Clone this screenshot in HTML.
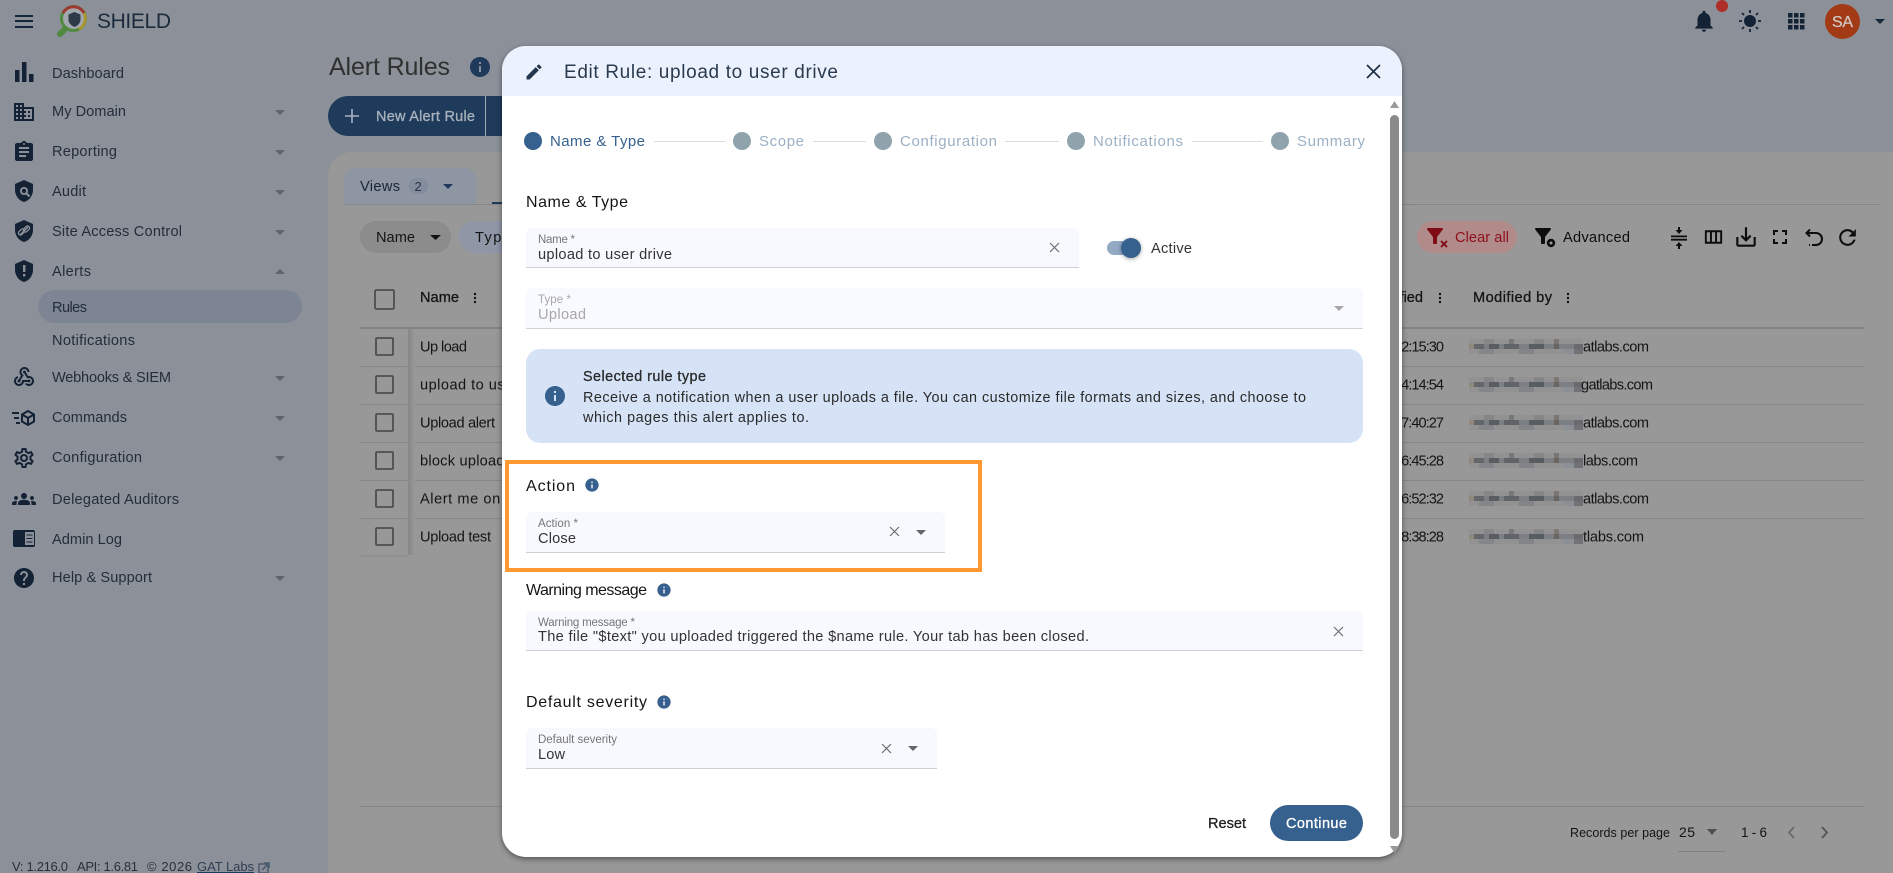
<!DOCTYPE html>
<html lang="en">
<head>
<meta charset="utf-8">
<title>SHIELD - Alert Rules</title>
<style>
html,body{margin:0;padding:0;width:1893px;height:873px;overflow:hidden;background:#8c9199}
svg{display:block;position:absolute;left:0;top:0}
text{font-family:"Liberation Sans",sans-serif;white-space:pre}
.s{font-size:14.6px;fill:#232d3b}
.t{font-size:14.6px;fill:#141414}
.m{stroke:currentColor;stroke-width:.3px}
.lb{font-size:11.5px;fill:#767676}
.v{font-size:14.6px;fill:#333}
.h{font-size:16px;fill:#151515}
.st{font-size:15px;fill:#9cb0c4}
.b{font-size:14.4px;fill:#2a2a2a}
</style>
</head>
<body>
<svg width="1893" height="873" viewBox="0 0 1893 873" xmlns="http://www.w3.org/2000/svg">
<defs>
<symbol id="domain" viewBox="0 0 24 24"><path d="M12 7V3H2v18h20V7H12zM6 19H4v-2h2v2zm0-4H4v-2h2v2zm0-4H4V9h2v2zm0-4H4V5h2v2zm4 12H8v-2h2v2zm0-4H8v-2h2v2zm0-4H8V9h2v2zm0-4H8V5h2v2zm10 12h-8v-2h2v-2h-2v-2h2v-2h-2V9h8v10zm-2-8h-2v2h2v-2zm0 4h-2v2h2v-2z"/></symbol>
<symbol id="assign" viewBox="0 0 24 24"><path d="M19 3h-4.18C14.4 1.84 13.3 1 12 1c-1.3 0-2.4.84-2.82 2H5c-1.1 0-2 .9-2 2v14c0 1.1.9 2 2 2h14c1.1 0 2-.9 2-2V5c0-1.1-.9-2-2-2zm-7 0c.55 0 1 .45 1 1s-.45 1-1 1-1-.45-1-1 .45-1 1-1zm2 14H7v-2h7v2zm3-4H7v-2h10v2zm0-4H7V7h10v2z"/></symbol>
<symbol id="shield" viewBox="0 0 24 24"><path d="M12 1L3 5v6c0 5.55 3.84 10.74 9 12 5.16-1.26 9-6.45 9-12V5l-9-4z"/></symbol>
<symbol id="webhook" viewBox="0 0 24 24"><path d="M10 15h5.88c.27-.31.67-.5 1.12-.5.83 0 1.5.67 1.5 1.5s-.67 1.5-1.5 1.5c-.44 0-.84-.19-1.12-.5H11.9c-.46 2.28-2.48 4-4.9 4-2.76 0-5-2.24-5-5 0-2.42 1.72-4.44 4-4.9v2.07c-1.16.41-2 1.53-2 2.83 0 1.65 1.35 3 3 3s3-1.35 3-3v-1zm2.5-11c1.65 0 3 1.35 3 3h2c0-2.76-2.24-5-5-5s-5 2.24-5 5c0 1.43.6 2.71 1.55 3.62l-2.35 3.9c-.68.14-1.2.75-1.2 1.48 0 .83.67 1.5 1.5 1.5s1.5-.67 1.5-1.5c0-.16-.02-.31-.07-.45l3.38-5.63C10.49 9.61 9.5 8.42 9.5 7c0-1.65 1.35-3 3-3zm4.5 9c-.64 0-1.23.2-1.72.54l-3.05-5.07C11.53 8.35 11 7.74 11 7c0-.83.67-1.5 1.5-1.5S14 6.17 14 7c0 .15-.02.29-.06.43l2.19 3.65c.28-.05.57-.08.87-.08 2.76 0 5 2.24 5 5s-2.24 5-5 5c-1.85 0-3.47-1.01-4.33-2.5h2.67c.48.32 1.05.5 1.66.5 1.65 0 3-1.35 3-3s-1.35-3-3-3z"/></symbol>
<symbol id="gear" viewBox="0 0 24 24"><path d="M19.43 12.98c.04-.32.07-.64.07-.98 0-.34-.03-.66-.07-.98l2.11-1.65c.19-.15.24-.42.12-.64l-2-3.46c-.09-.16-.26-.25-.44-.25-.06 0-.12.01-.17.03l-2.49 1c-.52-.4-1.08-.73-1.69-.98l-.38-2.65C14.46 2.18 14.25 2 14 2h-4c-.25 0-.46.18-.49.42l-.38 2.65c-.61.25-1.17.59-1.69.98l-2.49-1c-.06-.02-.12-.03-.18-.03-.17 0-.34.09-.43.25l-2 3.46c-.13.22-.07.49.12.64l2.11 1.65c-.04.32-.07.65-.07.98 0 .33.03.66.07.98l-2.11 1.65c-.19.15-.24.42-.12.64l2 3.46c.09.16.26.25.44.25.06 0 .12-.01.17-.03l2.49-1c.52.4 1.08.73 1.69.98l.38 2.65c.03.24.24.42.49.42h4c.25 0 .46-.18.49-.42l.38-2.65c.61-.25 1.17-.59 1.69-.98l2.49 1c.06.02.12.03.18.03.17 0 .34-.09.43-.25l2-3.46c.12-.22.07-.49-.12-.64l-2.11-1.65zm-1.98-1.71c.04.31.05.52.05.73 0 .21-.02.43-.05.73l-.14 1.13.89.7 1.08.84-.7 1.21-1.27-.51-1.04-.42-.9.68c-.43.32-.84.56-1.25.73l-1.06.43-.16 1.13-.2 1.35h-1.4l-.19-1.35-.16-1.13-1.06-.43c-.43-.18-.83-.41-1.23-.71l-.91-.7-1.06.43-1.27.51-.7-1.21 1.08-.84.89-.7-.14-1.13c-.03-.31-.05-.54-.05-.74s.02-.43.05-.73l.14-1.13-.89-.7-1.08-.84.7-1.21 1.27.51 1.04.42.9-.68c.43-.32.84-.56 1.25-.73l1.06-.43.16-1.13.2-1.35h1.39l.19 1.35.16 1.13 1.06.43c.43.18.83.41 1.23.71l.91.7 1.06-.43 1.27-.51.7 1.21-1.07.85-.89.7.14 1.13zM12 8c-2.21 0-4 1.79-4 4s1.79 4 4 4 4-1.79 4-4-1.79-4-4-4zm0 6c-1.1 0-2-.9-2-2s.9-2 2-2 2 .9 2 2-.9 2-2 2z"/></symbol>
<symbol id="groups" viewBox="0 0 24 24"><path d="M12 12.75c1.63 0 3.07.39 4.24.9 1.08.48 1.76 1.56 1.76 2.73V18H6v-1.61c0-1.18.68-2.26 1.76-2.73 1.17-.52 2.61-.91 4.24-.91zM4 13c1.1 0 2-.9 2-2s-.9-2-2-2-2 .9-2 2 .9 2 2 2zm1.13 1.1c-.37-.06-.74-.1-1.13-.1-.99 0-1.93.21-2.78.58C.48 14.9 0 15.62 0 16.43V18h4.5v-1.61c0-.83.23-1.61.63-2.29zM20 13c1.1 0 2-.9 2-2s-.9-2-2-2-2 .9-2 2 .9 2 2 2zm4 3.43c0-.81-.48-1.53-1.22-1.85-.85-.37-1.79-.58-2.78-.58-.39 0-.76.04-1.13.1.4.68.63 1.46.63 2.29V18H24v-1.57zM12 6c1.66 0 3 1.34 3 3s-1.34 3-3 3-3-1.34-3-3 1.34-3 3-3z"/></symbol>
<symbol id="help" viewBox="0 0 24 24"><path d="M12 2C6.48 2 2 6.48 2 12s4.48 10 10 10 10-4.48 10-10S17.52 2 12 2zm1 17h-2v-2h2v2zm2.07-7.75l-.9.92C13.45 12.9 13 13.5 13 15h-2v-.5c0-1.1.45-2.1 1.17-2.83l1.24-1.26c.37-.36.59-.86.59-1.41 0-1.1-.9-2-2-2s-2 .9-2 2H8c0-2.21 1.79-4 4-4s4 1.79 4 4c0 .88-.36 1.68-.93 2.25z"/></symbol>
<symbol id="edit" viewBox="0 0 24 24"><path d="M3 17.25V21h3.75L17.81 9.94l-3.75-3.75L3 17.25zM20.71 7.04c.39-.39.39-1.02 0-1.41l-2.34-2.34c-.39-.39-1.02-.39-1.41 0l-1.83 1.83 3.75 3.75 1.83-1.83z"/></symbol>
<symbol id="info" viewBox="0 0 24 24"><path d="M12 2C6.48 2 2 6.48 2 12s4.48 10 10 10 10-4.48 10-10S17.52 2 12 2zm1 15h-2v-6h2v6zm0-8h-2V7h2v2z"/></symbol>
<symbol id="bell" viewBox="0 0 24 24"><path d="M12 22c1.1 0 2-.9 2-2h-4c0 1.1.89 2 2 2zm6-6v-5c0-3.07-1.64-5.64-4.5-6.32V4c0-.83-.67-1.5-1.5-1.5s-1.5.67-1.5 1.5v.68C7.63 5.36 6 7.92 6 11v5l-2 2v1h16v-1l-2-2z"/></symbol>
<symbol id="filter" viewBox="0 0 24 24"><path d="M4.25 5.61C6.27 8.2 10 13 10 13v6c0 .55.45 1 1 1h2c.55 0 1-.45 1-1v-6s3.72-4.8 5.74-7.39c.51-.66.04-1.61-.79-1.61H5.04c-.83 0-1.3.95-.79 1.61z"/></symbol>
<symbol id="dl" viewBox="0 0 24 24"><path d="M19 12v7H5v-7H3v7c0 1.1.9 2 2 2h14c1.1 0 2-.9 2-2v-7h-2zm-6 .67l2.59-2.58L17 11.5l-5 5-5-5 1.41-1.41L11 12.67V3h2z"/></symbol>
<symbol id="full" viewBox="0 0 24 24"><path d="M7 14H5v5h5v-2H7v-3zm-2-4h2V7h3V5H5v5zm12 7h-3v2h5v-5h-2v3zM14 5v2h3v3h2V5h-5z"/></symbol>
<symbol id="col" viewBox="0 0 24 24"><path d="M3 5v14h18V5H3zm5.33 12H5V7h3.33v10zm5.34 0h-3.33V7h3.33v10zM19 17h-3.33V7H19v10z"/></symbol>
<symbol id="redo" viewBox="0 0 24 24"><path d="M17.65 6.35C16.2 4.9 14.21 4 12 4c-4.42 0-7.99 3.58-7.99 8s3.57 8 7.99 8c3.73 0 6.84-2.55 7.73-6h-2.08c-.82 2.33-3.04 4-5.65 4-3.31 0-6-2.69-6-6s2.69-6 6-6c1.66 0 3.14.69 4.22 1.78L13 11h7V4l-2.35 2.35z"/></symbol>
<pattern id="bl" patternUnits="userSpaceOnUse" width="115" height="38" patternTransform="translate(1469 339)">
<rect width="115" height="15" fill="#929292"/>
<rect y="5" width="115" height="5" fill="#7c7f83"/>
<rect x="0" y="5" width="5" height="5" fill="#90887f"/><rect x="5" y="5" width="10" height="5" fill="#63676c"/><rect x="20" y="5" width="10" height="5" fill="#595d62"/><rect x="35" y="5" width="15" height="5" fill="#606368"/><rect x="60" y="5" width="15" height="5" fill="#585d62"/><rect x="85" y="5" width="5" height="5" fill="#6b6561"/><rect x="105" y="5" width="10" height="5" fill="#6a6b6f"/>
<rect x="40" y="0" width="5" height="5" fill="#76787b"/><rect x="85" y="0" width="5" height="5" fill="#7a7773"/><rect x="15" y="0" width="10" height="5" fill="#868686"/><rect x="65" y="0" width="10" height="5" fill="#868686"/><rect x="105" y="10" width="10" height="5" fill="#727276"/><rect x="10" y="10" width="15" height="5" fill="#84868a"/><rect x="50" y="10" width="15" height="5" fill="#828488"/><rect x="95" y="10" width="10" height="5" fill="#8a9096"/>
</pattern>
<linearGradient id="sh" x1="0" x2="1" y1="0" y2="0"><stop offset="0" stop-color="#868686"/><stop offset="1" stop-color="#989898"/></linearGradient>
</defs>

<!-- page -->
<rect width="1893" height="873" fill="#8c9199"/>
<rect x="328" y="152" width="1600" height="760" rx="24" fill="#989898"/>

<!-- top bar -->
<g fill="#16263a"><rect x="15" y="15" width="18" height="2"/><rect x="15" y="20" width="18" height="2"/><rect x="15" y="26" width="18" height="2"/></g>
<path d="M66 28L60 34" stroke="#4f8a3f" stroke-width="6" stroke-linecap="round"/>
<circle cx="73.500" cy="18.500" r="12" fill="#a3a8ae"/>
<g fill="none" stroke-width="3">
<circle cx="73.500" cy="18.500" r="12" stroke="#4f8a3f"/>
<path d="M63 13A12 12 0 0 1 84 13" stroke="#9c3a2f"/>
<path d="M84 13A12 12 0 0 1 79 29" stroke="#a8962f"/>
</g>
<path d="M74.500 12l6 2.500v5c0 3.500-2.500 6-6 7.500-3.500-1.500-6-4-6-7.500v-5z" fill="#2e3a48"/>
<text x="97" y="28" textLength="74" style="font-size:21px;fill:#1b2a3d">SHIELD</text>

<g fill="#142235">
<use href="#bell" x="1691" y="8" width="26" height="26"/>
<circle cx="1750" cy="21" r="6"/>
</g>
<path d="M1750 10v3M1750 29v3M1739 21h3M1758 21h3M1742 13l2 2M1756 27l2 2M1742 29l2-2M1756 15l2-2" stroke="#142235" stroke-width="1.8"/>
<g fill="#142235">
<rect x="1788" y="13" width="4.5" height="4.5"/><rect x="1794" y="13" width="4.5" height="4.5"/><rect x="1800" y="13" width="4.5" height="4.5"/>
<rect x="1788" y="19" width="4.5" height="4.5"/><rect x="1794" y="19" width="4.5" height="4.5"/><rect x="1800" y="19" width="4.5" height="4.5"/>
<rect x="1788" y="25" width="4.5" height="4.5"/><rect x="1794" y="25" width="4.5" height="4.5"/><rect x="1800" y="25" width="4.5" height="4.5"/>
</g>
<circle cx="1722" cy="6" r="6" fill="#ac2e26"/>
<circle cx="1842.500" cy="21.500" r="17.500" fill="#a33a16"/>
<text x="1832" y="27" textLength="21" class="m" style="font-size:16px;fill:#cfc6bf;color:#cfc6bf">SA</text>
<polygon points="1875,19 1885,19 1880,24" fill="#16263a"/>

<!-- sidebar -->
<g fill="#142235">
<rect x="15" y="70" width="4.500" height="12"/><rect x="22" y="62" width="4.500" height="20"/><rect x="29" y="74" width="4.500" height="8"/>
<use href="#domain" x="12" y="100" width="24" height="24"/>
<use href="#assign" x="12" y="140" width="24" height="24"/>
<use href="#shield" x="12" y="179" width="24" height="24"/>
<use href="#shield" x="12" y="219" width="24" height="24"/>
<use href="#shield" x="12" y="259" width="24" height="24"/>
<use href="#webhook" x="12" y="365" width="24" height="24"/>
<use href="#gear" x="12" y="446" width="24" height="24"/>
<use href="#groups" x="12" y="487" width="24" height="24"/>
<use href="#help" x="12" y="566" width="24" height="24"/>
<rect x="13" y="530" width="22" height="17" rx="2"/>
</g>
<circle cx="24" cy="191" r="4" fill="#8c9199"/><circle cx="24" cy="191" r="2.200" fill="#142235"/><path d="M26.500 193.500l3 3" stroke="#8c9199" stroke-width="2"/>
<path d="M20 235l8-8" stroke="#8c9199" stroke-width="1.500"/><rect x="18" y="230" width="7" height="4" rx="2" fill="none" stroke="#8c9199" stroke-width="1.300" transform="rotate(-45 21.500 232)"/><rect x="23" y="227" width="7" height="4" rx="2" fill="none" stroke="#8c9199" stroke-width="1.300" transform="rotate(-45 26.500 229)"/>
<rect x="23" y="265" width="2.400" height="7" fill="#8c9199"/><rect x="23" y="274" width="2.400" height="2.400" fill="#8c9199"/>
<rect x="25" y="532" width="9" height="13" fill="#8c9199"/><path d="M26.500 535h6M26.500 538.500h6M26.500 542h6" stroke="#142235" stroke-width="1.100"/>
<g fill="none" stroke="#142235" stroke-width="2">
<path d="M28 411l6 3.500v7L28 425l-6-3.500v-7zM22 414.500l6 3.500 6-3.500M28 418v7"/>
<path d="M12 413h7M14 418h5M16 423h4"/>
</g>
<rect x="38" y="290" width="264" height="33" rx="16.500" fill="#7d8494"/>
<text x="52" y="78" class="s" textLength="72">Dashboard</text>
<text x="52" y="116" class="s" textLength="74">My Domain</text>
<text x="52" y="156" class="s" textLength="65">Reporting</text>
<text x="52" y="196" class="s" textLength="34">Audit</text>
<text x="52" y="236" class="s" textLength="130">Site Access Control</text>
<text x="52" y="276" class="s" textLength="39">Alerts</text>
<text x="52" y="312" class="s" textLength="35">Rules</text>
<text x="52" y="345" class="s" textLength="83">Notifications</text>
<text x="52" y="382" class="s" textLength="119">Webhooks &amp; SIEM</text>
<text x="52" y="422" class="s" textLength="75">Commands</text>
<text x="52" y="462" class="s" textLength="90">Configuration</text>
<text x="52" y="504" class="s" textLength="127">Delegated Auditors</text>
<text x="52" y="544" class="s" textLength="70">Admin Log</text>
<text x="52" y="582" class="s" textLength="100">Help &amp; Support</text>
<g fill="#5f656f">
<polygon points="275,110 285,110 280,115"/><polygon points="275,150 285,150 280,155"/><polygon points="275,190 285,190 280,195"/><polygon points="275,230 285,230 280,235"/>
<polygon points="275,274 285,274 280,269"/>
<polygon points="275,376 285,376 280,381"/><polygon points="275,416 285,416 280,421"/><polygon points="275,456 285,456 280,461"/><polygon points="275,576 285,576 280,581"/>
</g>
<text x="12" y="871" textLength="56" style="font-size:13px;fill:#2a2f38">V: 1.216.0</text>
<text x="77" y="871" textLength="61" style="font-size:13px;fill:#2a2f38">API: 1.6.81</text>
<text x="147" y="871" textLength="45" style="font-size:13px;fill:#2a2f38">© 2026</text>
<text x="197" y="871" textLength="57" style="font-size:13px;fill:#2f3e52">GAT Labs</text>
<rect x="197" y="872" width="57" height="1" fill="#1f3b5b"/>
<rect x="259" y="864" width="9" height="9" fill="none" stroke="#4b5c70" stroke-width="1.600"/><path d="M262 870l6-6M264 863h5v5" stroke="#4b5c70" stroke-width="1.600" fill="none"/>

<!-- page header -->
<text x="329" y="75" textLength="121" style="font-size:25px;fill:#2f3030">Alert Rules</text>
<use href="#info" x="468" y="55" width="24" height="24" fill="#1f3b5b"/>
<path d="M348 96h160v40H348a20 20 0 0 1 0-40z" fill="#1f3b5b"/>
<rect x="485" y="96" width="1" height="40" fill="#a0aab6"/>
<path d="M345 116h14M352 109v14" stroke="#a9b2bd" stroke-width="1.600"/>
<text x="376" y="121" textLength="99" class="m" style="font-size:14.500px;fill:#a9b2bd;color:#a9b2bd">New Alert Rule</text>

<!-- tabs -->
<path d="M344 204v-24a12 12 0 0 1 12-12h108a12 12 0 0 1 12 12v24z" fill="#8e95a3"/>
<rect x="344" y="204" width="1536" height="1" fill="#858585"/>
<rect x="492" y="202" width="40" height="2" fill="#1f3b5b"/>
<text x="360" y="191" textLength="40" style="font-size:14.600px;fill:#1b2635">Views</text>
<rect x="409" y="178" width="19" height="16" rx="8" fill="#848d9d"/>
<text x="414.500" y="191" style="font-size:13px;fill:#2a3342">2</text>
<polygon points="443,184 453,184 448,189" fill="#1f3b5b"/>

<!-- filters -->
<rect x="360" y="221" width="91" height="32" rx="16" fill="#8c8c8c"/>
<text x="376" y="242" textLength="39" class="t">Name</text>
<polygon points="430,235 441,235 435.500,240" fill="#111"/>
<rect x="459" y="221" width="90" height="32" rx="16" fill="#8f96a6"/>
<text x="475" y="242" textLength="36" class="t">Type</text>
<rect x="1417" y="221" width="100" height="32" rx="16" fill="#b18a8a"/>
<use href="#filter" x="1423" y="223" width="24" height="26" fill="#7e0a14"/>
<path d="M1441 241l6 6M1447 241l-6 6" stroke="#7e0a14" stroke-width="1.900"/>
<text x="1455" y="242" textLength="54" style="font-size:14.600px;fill:#8e0f1a">Clear all</text>
<use href="#filter" x="1531" y="223" width="24" height="26" fill="#0d0d0d"/>
<circle cx="1551" cy="243" r="4.200" fill="#0d0d0d"/><circle cx="1551" cy="243" r="1.500" fill="#989898"/>
<text x="1563" y="242" textLength="67" style="font-size:14.600px;fill:#0d0d0d">Advanced</text>
<g fill="#0d0d0d">
<path d="M1671 235.500h16v1.800h-16zM1671 238.800h16v1.800h-16z"/>
<polygon points="1679,234 1675.500,230 1678,230 1678,227 1680,227 1680,230 1682.500,230"/>
<polygon points="1679,242 1675.500,246 1678,246 1678,249 1680,249 1680,246 1682.500,246"/>
<use href="#col" x="1702" y="225.500" width="23" height="23"/>
<use href="#dl" x="1733" y="224" width="26" height="26"/>
<use href="#full" x="1768" y="225" width="24" height="24"/>
<use href="#redo" x="1835" y="225" width="25" height="25"/>
</g>
<path d="M1810 229.500l-3.500 3.500 3.500 3.500" fill="none" stroke="#0d0d0d" stroke-width="2"/>
<path d="M1807 233h9a6 6 0 0 1 0 12h-4M1809 245h1" fill="none" stroke="#0d0d0d" stroke-width="2"/>

<!-- table -->
<rect x="375" y="290" width="19" height="19" rx="1.500" fill="none" stroke="#4e4e4e" stroke-width="1.800"/>
<text x="420" y="302" textLength="39" class="t m" style="color:#141414">Name</text>
<g fill="#111"><circle cx="475" cy="294" r="1.200"/><circle cx="475" cy="298" r="1.200"/><circle cx="475" cy="302" r="1.200"/></g>
<text x="1368" y="302" textLength="55" class="t m" style="color:#141414">Modified</text>
<g fill="#111"><circle cx="1440" cy="294" r="1.200"/><circle cx="1440" cy="298" r="1.200"/><circle cx="1440" cy="302" r="1.200"/></g>
<text x="1473" y="302" textLength="79" class="t m" style="color:#141414">Modified by</text>
<g fill="#111"><circle cx="1568" cy="294" r="1.200"/><circle cx="1568" cy="298" r="1.200"/><circle cx="1568" cy="302" r="1.200"/></g>
<rect x="360" y="327" width="1504" height="2" fill="#838383"/>
<g fill="#878787">
<rect x="360" y="366" width="1504" height="1"/><rect x="360" y="404" width="1504" height="1"/><rect x="360" y="442" width="1504" height="1"/><rect x="360" y="480" width="1504" height="1"/><rect x="360" y="518" width="1504" height="1"/>
</g>
<rect x="408" y="329" width="7" height="226" fill="url(#sh)"/>
<rect x="360" y="555" width="48" height="2" fill="#8f8f8f"/>
<g fill="none" stroke="#4e4e4e" stroke-width="1.800">
<rect x="376" y="338" width="17" height="17" rx="1"/><rect x="376" y="376" width="17" height="17" rx="1"/><rect x="376" y="414" width="17" height="17" rx="1"/><rect x="376" y="452" width="17" height="17" rx="1"/><rect x="376" y="490" width="17" height="17" rx="1"/><rect x="376" y="528" width="17" height="17" rx="1"/>
</g>
<text x="420" y="351.500" textLength="47" class="t">Up load</text>
<text x="420" y="389.500" textLength="137" class="t">upload to user drive</text>
<text x="420" y="427.500" textLength="75" class="t">Upload alert</text>
<text x="420" y="465.500" textLength="92" class="t">block uploads</text>
<text x="420" y="503.500" textLength="132" class="t">Alert me on upload</text>
<text x="420" y="541.500" textLength="71" class="t">Upload test</text>
<text x="1394" y="351.500" textLength="50" class="t">12:15:30</text>
<text x="1394" y="389.500" textLength="50" class="t">14:14:54</text>
<text x="1394" y="427.500" textLength="50" class="t">17:40:27</text>
<text x="1394" y="465.500" textLength="50" class="t">16:45:28</text>
<text x="1394" y="503.500" textLength="50" class="t">16:52:32</text>
<text x="1394" y="541.500" textLength="50" class="t">18:38:28</text>
<g fill="url(#bl)">
<rect x="1469" y="339" width="114" height="15"/><rect x="1469" y="377" width="114" height="15"/><rect x="1469" y="415" width="114" height="15"/><rect x="1469" y="453" width="114" height="15"/><rect x="1469" y="491" width="114" height="15"/><rect x="1469" y="529" width="114" height="15"/>
</g>
<text x="1583" y="351.500" textLength="66" class="t">atlabs.com</text>
<text x="1581" y="389.500" textLength="72" class="t">gatlabs.com</text>
<text x="1583" y="427.500" textLength="66" class="t">atlabs.com</text>
<text x="1583" y="465.500" textLength="55" class="t">labs.com</text>
<text x="1583" y="503.500" textLength="66" class="t">atlabs.com</text>
<text x="1583" y="541.500" textLength="61" class="t">tlabs.com</text>

<!-- pagination -->
<rect x="360" y="806" width="1504" height="1" fill="#858585"/>
<text x="1570" y="837" textLength="100" style="font-size:12.500px;fill:#141414">Records per page</text>
<text x="1679" y="837" textLength="16" style="font-size:14px;fill:#141414">25</text>
<polygon points="1707,829 1717,829 1712,835" fill="#505050"/>
<rect x="1678" y="851" width="47" height="1" fill="#808080"/>
<text x="1741" y="837" textLength="26" style="font-size:13.500px;fill:#141414">1 - 6</text>
<path d="M1794 827l-5 5.500 5 5.500" fill="none" stroke="#6a6a6a" stroke-width="1.800"/>
<path d="M1822 827l5 5.500-5 5.500" fill="none" stroke="#555" stroke-width="1.800"/>

<!-- modal -->
<rect x="502" y="46" width="900" height="811" rx="24" fill="#fff" style="filter:drop-shadow(0 2px 3px rgba(0,0,0,.45))"/>
<path d="M502 96V70a24 24 0 0 1 24-24h852a24 24 0 0 1 24 24v26z" fill="#ebf2fe"/>
<use href="#edit" x="524" y="62" width="20" height="20" fill="#24364c"/>
<text x="564" y="78" textLength="274" style="font-size:19px;fill:#2a3a4f">Edit Rule: upload to user drive</text>
<path d="M1367 65l13 13M1380 65l-13 13" stroke="#1f2e42" stroke-width="1.700"/>

<!-- scrollbar -->
<rect x="1390" y="115" width="9" height="724" rx="4.500" fill="#8a8a8a"/>
<polygon points="1394.500,101 1399,108 1390,108" fill="#9a9a9a"/>
<polygon points="1394.500,853 1399,846 1390,846" fill="#9a9a9a"/>

<!-- stepper -->
<g fill="#dcdcdc"><rect x="654" y="141" width="71" height="1"/><rect x="813" y="141" width="53" height="1"/><rect x="1005" y="141" width="54" height="1"/><rect x="1192" y="141" width="71" height="1"/></g>
<circle cx="533" cy="141" r="9" fill="#36618e"/>
<g fill="#8fa3ad"><circle cx="742" cy="141" r="9"/><circle cx="883" cy="141" r="9"/><circle cx="1076" cy="141" r="9"/><circle cx="1280" cy="141" r="9"/></g>
<text x="550" y="146" textLength="95" class="st" style="fill:#36618e">Name &amp; Type</text>
<text x="759" y="146" textLength="45" class="st">Scope</text>
<text x="900" y="146" textLength="97" class="st">Configuration</text>
<text x="1093" y="146" textLength="90" class="st">Notifications</text>
<text x="1297" y="146" textLength="68" class="st">Summary</text>

<!-- Name & Type -->
<text x="526" y="207" textLength="102" class="h">Name &amp; Type</text>
<path d="M526 268v-34a6 6 0 0 1 6-6h541a6 6 0 0 1 6 6v34z" fill="#f7f9ff"/><rect x="526" y="267" width="553" height="1" fill="#cfcfd4"/>
<text x="538" y="243" textLength="37" class="lb">Name *</text>
<text x="538" y="259" textLength="134" class="v">upload to user drive</text>
<path d="M1050 243l9 9M1059 243l-9 9" stroke="#6e6e6e" stroke-width="1.200"/>
<rect x="1107" y="241" width="28" height="14" rx="7" fill="#93a9c4"/>
<circle cx="1131" cy="248" r="10" fill="#36618e" style="filter:drop-shadow(0 1px 2px rgba(0,0,0,.35))"/>
<text x="1151" y="253" textLength="41" class="v">Active</text>

<path d="M526 329v-35a6 6 0 0 1 6-6h825a6 6 0 0 1 6 6v35z" fill="#f9faff"/><rect x="526" y="328" width="837" height="1" fill="#d2d2d6"/>
<text x="538" y="303" textLength="33" class="lb" style="fill:#a8a8a8">Type *</text>
<text x="538" y="319" textLength="48" class="v" style="fill:#a8a8a8">Upload</text>
<polygon points="1334,306 1344,306 1339,311" fill="#a8a8a8"/>

<!-- info box -->
<rect x="526" y="349" width="837" height="94" rx="14" fill="#d6e3f7"/>
<use href="#info" x="543" y="384" width="24" height="24" fill="#36618e"/>
<text x="583" y="381" textLength="123" class="b m" style="color:#2a2a2a">Selected rule type</text>
<text x="583" y="402" textLength="723" class="b">Receive a notification when a user uploads a file. You can customize file formats and sizes, and choose to</text>
<text x="583" y="422" textLength="226" class="b">which pages this alert applies to.</text>

<!-- highlight -->
<rect x="507" y="462" width="473" height="108" fill="none" stroke="#ff9833" stroke-width="4"/>
<text x="526" y="491" textLength="49" class="h">Action</text>
<use href="#info" x="584" y="477" width="16" height="16" fill="#36618e"/>
<path d="M526 553v-35a6 6 0 0 1 6-6h407a6 6 0 0 1 6 6v35z" fill="#f7f9ff"/><rect x="526" y="552" width="419" height="1" fill="#cfcfd4"/>
<text x="538" y="527" textLength="40" class="lb">Action *</text>
<text x="538" y="543" textLength="38" class="v">Close</text>
<path d="M890 527l9 9M899 527l-9 9" stroke="#6e6e6e" stroke-width="1.200"/>
<polygon points="916,530 926,530 921,535" fill="#666"/>

<!-- Warning -->
<text x="526" y="595" textLength="121" class="h">Warning message</text>
<use href="#info" x="656" y="582" width="16" height="16" fill="#36618e"/>
<path d="M526 651v-34a6 6 0 0 1 6-6h825a6 6 0 0 1 6 6v34z" fill="#f7f9ff"/><rect x="526" y="650" width="837" height="1" fill="#cfcfd4"/>
<text x="538" y="626" textLength="97" class="lb">Warning message *</text>
<text x="538" y="641" textLength="551" class="v">The file "$text" you uploaded triggered the $name rule. Your tab has been closed.</text>
<path d="M1334 627l9 9M1343 627l-9 9" stroke="#6e6e6e" stroke-width="1.200"/>

<!-- Severity -->
<text x="526" y="707" textLength="121" class="h">Default severity</text>
<use href="#info" x="656" y="694" width="16" height="16" fill="#36618e"/>
<path d="M526 769v-35a6 6 0 0 1 6-6h399a6 6 0 0 1 6 6v35z" fill="#f7f9ff"/><rect x="526" y="768" width="411" height="1" fill="#cfcfd4"/>
<text x="538" y="743" textLength="79" class="lb">Default severity</text>
<text x="538" y="759" textLength="27" class="v">Low</text>
<path d="M882 744l9 9M891 744l-9 9" stroke="#6e6e6e" stroke-width="1.200"/>
<polygon points="908,746 918,746 913,751" fill="#666"/>

<!-- actions -->
<text x="1208" y="828" textLength="38" class="v m" style="color:#222;fill:#222">Reset</text>
<rect x="1270" y="805" width="93" height="36" rx="18" fill="#36618e"/>
<text x="1286" y="828" textLength="61" class="m" style="font-size:14.500px;fill:#fff;color:#fff">Continue</text>
</svg>
</body>
</html>
